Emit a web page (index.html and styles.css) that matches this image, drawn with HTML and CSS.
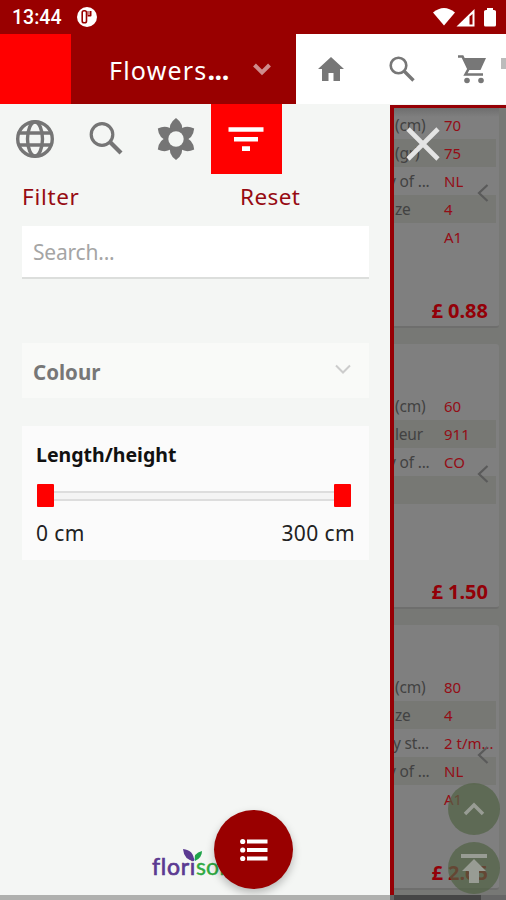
FILE: index.html
```html
<!DOCTYPE html>
<html lang="en">
<head>
<meta charset="utf-8">
<title>Flowers</title>
<link rel="stylesheet" href="styles.css">
</head>
<body>
<div class="app">
  <div class="status">
    <span class="time">13:44</span>
    <svg class="notif" width="20" height="20" viewBox="0 0 20 20"><circle cx="10" cy="10" r="10" fill="#fff"/><rect x="5.2" y="3.8" width="4.3" height="12" rx="1.8" fill="#fff" stroke="#900" stroke-width="1.6"/><path d="M10.500 4H14.500V8.500Q14.500 9.500 13.500 9.500H10.500Z" fill="#900"/><path d="M12 4V8" stroke="#fff"/></svg>
    <svg class="signals" width="64" height="20" viewBox="0 0 64 20"><path d="M0 5.500Q11 -3.500 22 5.500L11 18.500Z" fill="#fff"/><path d="M23.500 19.500L41.500 2V19.500Z" fill="#fff"/><path d="M36.500 9.500V17.500H39.500V7Z" fill="#900"/><path d="M51 4.500Q51 3 53 3H54V1H60V3H61Q63 3 63 4.500V18Q63 19.500 61.500 19.500H52.500Q51 19.500 51 18Z" fill="#fff"/></svg>
  </div>
  <header class="header">
    <div class="brand"></div>
    <div class="title"><span class="title-text">Flowers<b>...</b></span>
      <svg width="18" height="13" viewBox="0 0 18 13"><path d="M1.500 2L9 9.500L16.500 2" fill="none" stroke="#cf8c8c" stroke-width="4"/></svg>
    </div>
    <nav class="nav">
      <svg width="36" height="36" viewBox="0 0 36 36"><path d="M5 18L18 6L31 18H27V30H20.500V22H15.500V30H9V18Z" fill="#777"/></svg>
      <svg width="36" height="36" viewBox="0 0 36 36"><circle cx="14.500" cy="14.500" r="7.800" fill="none" stroke="#777" stroke-width="2.600"/><path d="M20 20L29.500 29.500" stroke="#777" stroke-width="3.300"/></svg>
      <svg width="36" height="36" viewBox="0 0 36 36"><path d="M3 5.500H7.500L13.500 18L10.500 23.500H28" fill="none" stroke="#777" stroke-width="2.600"/><path d="M8 7H31L25.500 19H13Z" fill="#777"/><circle cx="12" cy="29.500" r="2.800" fill="#777"/><circle cx="26" cy="29.500" r="2.800" fill="#777"/></svg>
    </nav>
    <span class="nav-more"></span>
  </header>
  <div class="main">
    <aside class="drawer">
      <div class="tabs">
        <div class="tab"><svg width="40" height="40" viewBox="0 0 40 40"><g fill="none" stroke="#757575" stroke-width="3.400"><circle cx="20" cy="20" r="17.300"/><ellipse cx="20" cy="20" rx="7.500" ry="17"/><path d="M4.500 14H35.500M4.500 26H35.500"/></g></svg></div>
        <div class="tab"><svg width="40" height="40" viewBox="0 0 40 40"><circle cx="16" cy="15.500" r="10.800" fill="none" stroke="#757575" stroke-width="3.200"/><path d="M23.500 22.500L35 34" stroke="#757575" stroke-width="4.300"/></svg></div>
        <div class="tab"><svg width="42" height="44" viewBox="-21 -22 42 44"><defs><path id="petal" d="M-5.500 -6Q-8.500 -15 0 -21Q8.500 -15 5.500 -6Z"/></defs><g fill="#757575"><use href="#petal"/><use href="#petal" transform="rotate(60)"/><use href="#petal" transform="rotate(120)"/><use href="#petal" transform="rotate(180)"/><use href="#petal" transform="rotate(240)"/><use href="#petal" transform="rotate(300)"/><circle r="11"/></g><circle r="7.700" fill="#f4f6f4"/></svg></div>
        <div class="tab active"><svg width="36" height="26" viewBox="0 0 36 26"><path d="M.5 3.500H35.500M6 13.300H30M14 22.600H22" stroke="#fff" stroke-width="4.600"/></svg></div>
      </div>
      <div class="filter-head"><span class="filter">Filter</span><span class="reset">Reset</span></div>
      <div class="search">Search...</div>
      <div class="colour"><span>Colour</span><svg width="16" height="11" viewBox="0 0 16 11"><path d="M1 1.500L8 8.500L15 1.500" fill="none" stroke="#ccc" stroke-width="2"/></svg></div>
      <div class="range">
        <div class="range-title">Length/height</div>
        <div class="slider"><i class="handle"></i><i class="track"></i><i class="handle"></i></div>
        <div class="range-values"><span>0 cm</span><span>300 cm</span></div>
      </div>
      <div class="logo"><span class="flori">flori</span><span class="soft">soft</span>
        <svg class="leaf" width="20" height="14" viewBox="0 0 20 14"><path d="M0 0Q11 1 11 12Q1 11 0 0Z" fill="#5b3a91"/><path d="M12 12Q10 4 19 2Q19 9 12 12Z" fill="#1fa34a"/></svg>
      </div>
      <div class="fab"><svg width="28" height="24" viewBox="0 0 28 24"><g fill="#fff"><circle cx="2.700" cy="3.500" r="2.600"/><circle cx="2.700" cy="12" r="2.600"/><circle cx="2.700" cy="20.500" r="2.600"/><path d="M7 1.500H27.500V5.500H7ZM7 10H27.500V14H7ZM7 18.500H27.500V22.500H7Z"/></g></svg></div>
    </aside>
    <section class="list">
      <article class="card first">
        <div class="row"><span>(cm)</span><em>70</em></div>
        <div class="row"><span>(gr)</span><em>75</em></div>
        <div class="row"><span class="cut">y of ...</span><em>NL</em></div>
        <div class="row"><span>ze</span><em>4</em></div>
        <div class="row"><span></span><em>A1</em></div>
        <svg class="prev" width="12" height="20" viewBox="0 0 12 20"><path d="M10.500 2L2 10L10.500 18" fill="none" stroke="#5a5a5a" stroke-width="2.200"/></svg>
        <div class="price">£ 0.88</div>
      </article>
      <article class="card">
        <div class="row"><span>(cm)</span><em>60</em></div>
        <div class="row"><span>leur</span><em>911</em></div>
        <div class="row"><span class="cut">y of ...</span><em>CO</em></div>
        <div class="row"></div>
        <svg class="prev" width="12" height="20" viewBox="0 0 12 20"><path d="M10.500 2L2 10L10.500 18" fill="none" stroke="#5a5a5a" stroke-width="2.200"/></svg>
        <div class="price">£ 1.50</div>
      </article>
      <article class="card">
        <div class="row"><span>(cm)</span><em>80</em></div>
        <div class="row"><span>ze</span><em>4</em></div>
        <div class="row"><span class="state">y st...</span><em>2 t/m...</em></div>
        <div class="row"><span class="cut">y of ...</span><em>NL</em></div>
        <div class="row"><span></span><em>A1</em></div>
        <svg class="prev" width="12" height="20" viewBox="0 0 12 20"><path d="M10.500 2L2 10L10.500 18" fill="none" stroke="#5a5a5a" stroke-width="2.200"/></svg>
        <div class="price">£ 2.65</div>
      </article>
      <svg class="close" width="34" height="34" viewBox="0 0 34 34"><path d="M2 2L32 32M32 2L2 32" stroke="#e4e4e4" stroke-width="4.600"/></svg>
      <div class="jumps">
        <div class="jump"><svg width="22" height="14" viewBox="0 0 22 14"><path d="M2 12L11 3L20 12" fill="none" stroke="#989c94" stroke-width="3.500"/></svg></div>
        <div class="jump"><svg width="26" height="30" viewBox="0 0 26 30"><path d="M0 1H26V5H0ZM13 6L25 18H18V30H8V18H1Z" fill="#989c94"/></svg></div>
      </div>
    </section>
    <div class="scrollbar"><i></i></div>
  </div>
</div>
</body>
</html>
```

FILE: styles.css
```css
* { box-sizing: border-box; }
body { margin: 0; font-family: "Noto Sans", sans-serif; }
svg { display: block; flex: none; }
.app { width: 506px; height: 900px; overflow: hidden; display: flex; flex-direction: column; background: #f4f6f4; }
.status { height: 34px; background: #900; color: #fff; display: flex; align-items: center; padding: 0 9px 0 12px; flex: none; }
.time { font: 500 19.5px/34px Roboto, sans-serif; width: 65px; padding-top: 2px; }
.signals { margin-left: auto; }
.header { height: 70px; flex: none; display: flex; background: #fff; }
.brand { width: 71px; background: #f00; }
.title { width: 225px; background: #900; color: #fff; display: flex; align-items: center; padding-left: 38px; }
.title-text { font-size: 25px; letter-spacing: 1.2px; width: 144px; white-space: nowrap; line-height: 70px; padding-top: 2px; }
.title-text b { font-size: 27px; letter-spacing: -.5px; line-height: 1; }
.nav { flex: 1; display: flex; align-items: center; gap: 35px; padding-left: 17px; }
.nav-more { width: 5px; height: 11px; background: #bbb; margin-top: 24px; }
.main { flex: 1; min-height: 0; display: flex; position: relative; }
.drawer { width: 390px; position: relative; background: #f4f6f4; }
.tabs { display: flex; height: 70px; }
.tab { width: 70.4px; display: flex; align-items: center; justify-content: center; }
.active { background: #f00; }
.filter-head { display: flex; height: 52px; padding: 0 22px; font-size: 22.5px; line-height: 46px; color: #970b12; }
.filter { width: 218px; letter-spacing: .7px; }
.reset { letter-spacing: .4px; }
.search { margin: 0 21px 0 22px; height: 53px; background: #fff; border-bottom: 2px solid #dcdedc; color: #a5a5a5; font-size: 21px; line-height: 52px; padding-left: 11px; letter-spacing: -.2px; }
.colour { margin: 64px 21px 0 22px; height: 55px; background: #f9faf8; color: #777; font-weight: 700; font-size: 20.5px; display: flex; justify-content: space-between; align-items: center; padding: 2px 18px 0 11px; }
.colour svg { margin-top: -5px; }
.range { margin: 28px 21px 0 22px; height: 134px; background: #fbfbfb; padding: 11px 14px; }
.range-title { font-size: 19.5px; font-weight: 700; line-height: 36px; color: #111; }
.slider { display: flex; align-items: center; margin: 11px 4px 0 1px; height: 23px; }
.handle { width: 17px; height: 23px; background: #f00; border-radius: 1px; }
.track { flex: 1; height: 10px; border: solid #ddd; border-width: 2px 0; background: #f4f4f4; }
.range-values { display: flex; justify-content: space-between; font-size: 21px; line-height: 52px; color: #222; height: 30px; letter-spacing: .4px; }
.logo { position: absolute; left: 152px; top: 745px; font: 400 23px/34px Lato, sans-serif; display: flex; }
.flori { color: #5b3a91; letter-spacing: .7px; -webkit-text-stroke: .7px #5b3a91; }
.soft { color: #2faa42; font-weight: 400; -webkit-text-stroke: .4px #2faa42; }
.leaf { position: absolute; left: 31px; top: 0; }
.fab { position: absolute; left: 214px; top: 706px; width: 79px; height: 79px; border-radius: 50%; background: #900; display: flex; align-items: center; justify-content: center; box-shadow: 0 4px 9px rgba(0,0,0,.25); }
.list { width: 116px; height: 795px; margin-top: 1px; border-left: 4px solid #960005; border-top: 3px solid #960005; background: #777875; position: relative; overflow: hidden; }
.card { width: 105px; height: 265px; margin-bottom: 16px; padding-top: 48px; background: #7f7f7f; border-bottom: 2px solid #6e6e6d; border-radius: 0 3px 3px 0; position: relative; }
.first { margin-top: -45px; background: linear-gradient(#6e6e6e 45px, #7f7f7f 54px); }
.row { height: 28px; width: 102px; display: flex; font-size: 15.5px; line-height: 28px; white-space: nowrap; color: #424242; }
.row:nth-child(even) { background: #777874; }
.row span { width: 50px; padding-left: 1px; letter-spacing: -.2px; }
.row .cut { padding: 0; text-indent: -6px; }
.row .state { padding: 0; text-indent: -1px; }
.row em { font-style: normal; color: #940d16; font-size: 15px; }
.prev { position: absolute; left: 83px; top: 120px; }
.price { position: absolute; right: 11px; bottom: 1px; color: #930008; font-size: 20px; font-weight: 700; line-height: 28px; white-space: nowrap; }
.close { position: absolute; left: 12px; top: 19px; }
.jumps { position: absolute; left: 54px; top: 675px; display: flex; flex-direction: column; gap: 7px; }
.jump { width: 52px; height: 52px; border-radius: 50%; background: rgba(82,99,69,.72); display: flex; align-items: center; justify-content: center; }
.scrollbar { position: absolute; left: 0; right: 0; bottom: 0; height: 5px; background: linear-gradient(90deg, #afb0ae 390px, #666 390px); }
.scrollbar i { display: block; height: 5px; width: 87px; margin-left: 394px; background: #464646; }
```
